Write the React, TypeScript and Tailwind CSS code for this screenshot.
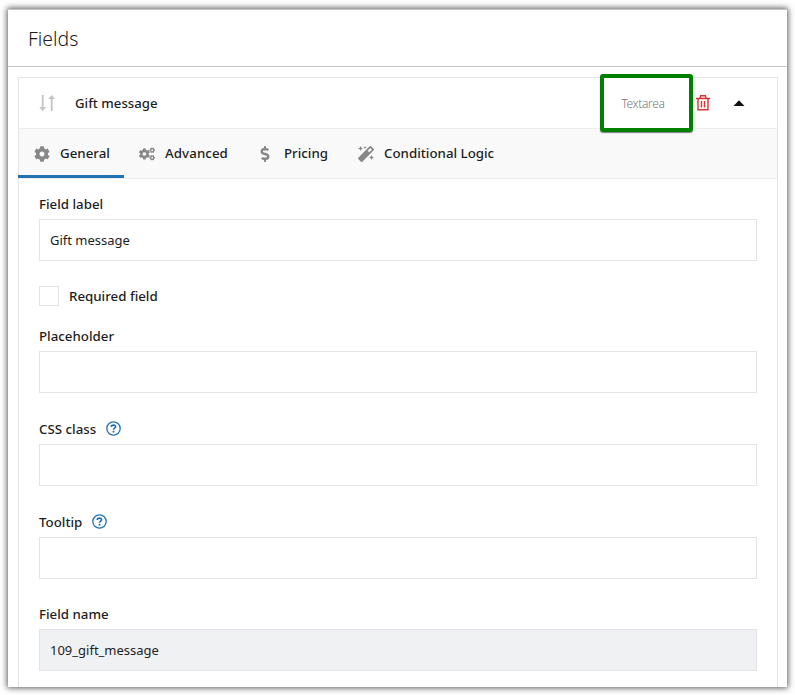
import { useState } from "react";
import type { ReactNode } from "react";
import { FaCog, FaCogs, FaDollarSign, FaMagic } from "react-icons/fa";

const tabs = [
  { label: "General", icon: FaCog, className: "-ml-px w-[106px] pl-4", text: "" },
  { label: "Advanced", icon: FaCogs, className: "w-[119px] pl-[15px]", text: "tracking-[0.08px]" },
  { label: "Pricing", icon: FaDollarSign, className: "w-[99px] pl-[14px]", text: "ml-px" },
  { label: "Conditional Logic", icon: FaMagic, className: "w-[153px] pl-4", text: "" },
];

function SortArrows() {
  return (
    <svg width="18" height="18" viewBox="0 0 18 18" className="text-[#c3c4c7]" fill="currentColor">
      <path d="M3.8 1h1.8v12h2.5l-3.4 4-3.4-4h2.5z" />
      <path d="M12.8 17h1.8V5h2.5l-3.4-4-3.4 4h2.5z" />
    </svg>
  );
}

function TrashIcon() {
  return (
    <svg width="14" height="16" viewBox="0 0 14 16" fill="none" stroke="#dc3232" strokeWidth="1.4">
      <path d="M0 3.5h14M4 3.5L4.6 .8h4.8l.6 2.7M2 3.5v11.3h10V3.5M5.5 6v6.5M8.5 6v6.5" />
    </svg>
  );
}

function HelpIcon() {
  return (
    <svg width="15" height="15" viewBox="0 0 15 15" fill="none" stroke="#2271b1" className="mt-[-3px]">
      <circle cx="7.5" cy="7.5" r="6.7" strokeWidth="1.3" />
      <path d="M5.3 6c0-2.5 4.3-2.5 4.3-.3 0 1.4-2.1 1.4-2.1 3.1" strokeWidth="1.7" />
      <path d="M7.5 9.8v1.7" strokeWidth="1.8" />
    </svg>
  );
}

function Label({ children, help }: { children: ReactNode; help?: boolean }) {
  return (
    <div className="flex h-[20px] items-center gap-[10px] pt-[2px] text-[13.3px] font-medium">
      <span>{children}</span>
      {help && <HelpIcon />}
    </div>
  );
}

const inputClass = "h-[42px] w-full border border-[#e2e4e7] px-[10px] text-[13px] outline-none";

export default function App() {
  const [active, setActive] = useState("General");

  return (
    <div className="h-[695px] w-[795px] overflow-hidden bg-white px-2 pt-[9px] font-['Noto_Sans',sans-serif] text-[#1e1e1e]">
      <div className="h-[678px] w-[779px] border-t border-[#c3c4c7] bg-white shadow-[0_0_6px_1px_rgba(0,0,0,0.65)]">
        <div className="flex h-[57px] items-center border-b border-[#c3c4c7] pt-[2px] pl-5">
          <h1 className="text-[19.4px] font-light">Fields</h1>
        </div>

        <div className="mt-[10px] mr-[9px] ml-[10px] h-[610px] border-x border-t border-[#e2e4e7]">
          <div className="flex h-[51px] items-center border-b border-[#eeeeee] pl-[19px]">
            <SortArrows />
            <span className="mt-[2px] ml-[19px] flex-1 text-[13.2px] font-medium">Gift message</span>
            <div className="mt-[-1px] mr-[3px] flex h-[58px] w-[93px] items-center justify-center rounded-[3px] border-4 border-[#008000] pt-[2px] pr-[7px] text-[12px] font-light tracking-[-0.35px] text-[#777777] shadow-[0_1px_1px_rgba(0,0,0,0.5)]">
              Textarea
            </div>
            <button aria-label="Delete field">
              <TrashIcon />
            </button>
            <button aria-label="Collapse field" className="mr-[32px] ml-[23px]">
              <svg width="12" height="6" viewBox="0 0 12 6">
                <path d="M.5 6L6 .3 11.5 6z" fill="#111111" />
              </svg>
            </button>
          </div>

          <div className="flex h-[50px] border-b border-[#eeeeee] bg-[#f9f9f9]">
            {tabs.map(({ label, icon: Icon, className, text }) => (
              <button
                key={label}
                onClick={() => setActive(label)}
                className={`flex h-[49px] items-center gap-[10px] border-b-[3px] pt-[3px] ${className} ${
                  active === label ? "border-[#2271b1]" : "border-transparent"
                }`}
              >
                <Icon size={16} className="shrink-0 text-[#888888]" />
                <span className={`text-[13.3px] font-medium whitespace-nowrap ${text}`}>{label}</span>
              </button>
            ))}
          </div>

          <div className="px-5 pt-[15px]">
            <Label>Field label</Label>
            <input className={`mt-[5px] block ${inputClass}`} defaultValue="Gift message" />
            <label className="mt-[25px] flex h-[20px] items-center gap-[10px] text-[13.3px] font-medium">
              <input type="checkbox" className="size-5 appearance-none border border-[#e2e4e7]" />
              <span className="pt-[2px]">Required field</span>
            </label>
            <div className="mt-5">
              <Label>Placeholder</Label>
              <input className={`mt-[5px] block ${inputClass}`} />
            </div>
            <div className="mt-[26px]">
              <Label help>CSS class</Label>
              <input className={`mt-[5px] block ${inputClass}`} />
            </div>
            <div className="mt-[26px]">
              <Label help>Tooltip</Label>
              <input className={`mt-[5px] block ${inputClass}`} />
            </div>
            <div className="mt-[25px]">
              <Label>Field name</Label>
              <input className={`mt-[5px] block bg-[#f0f1f3] ${inputClass}`} defaultValue="109_gift_message" readOnly />
            </div>
          </div>
        </div>
      </div>
    </div>
  );
}
